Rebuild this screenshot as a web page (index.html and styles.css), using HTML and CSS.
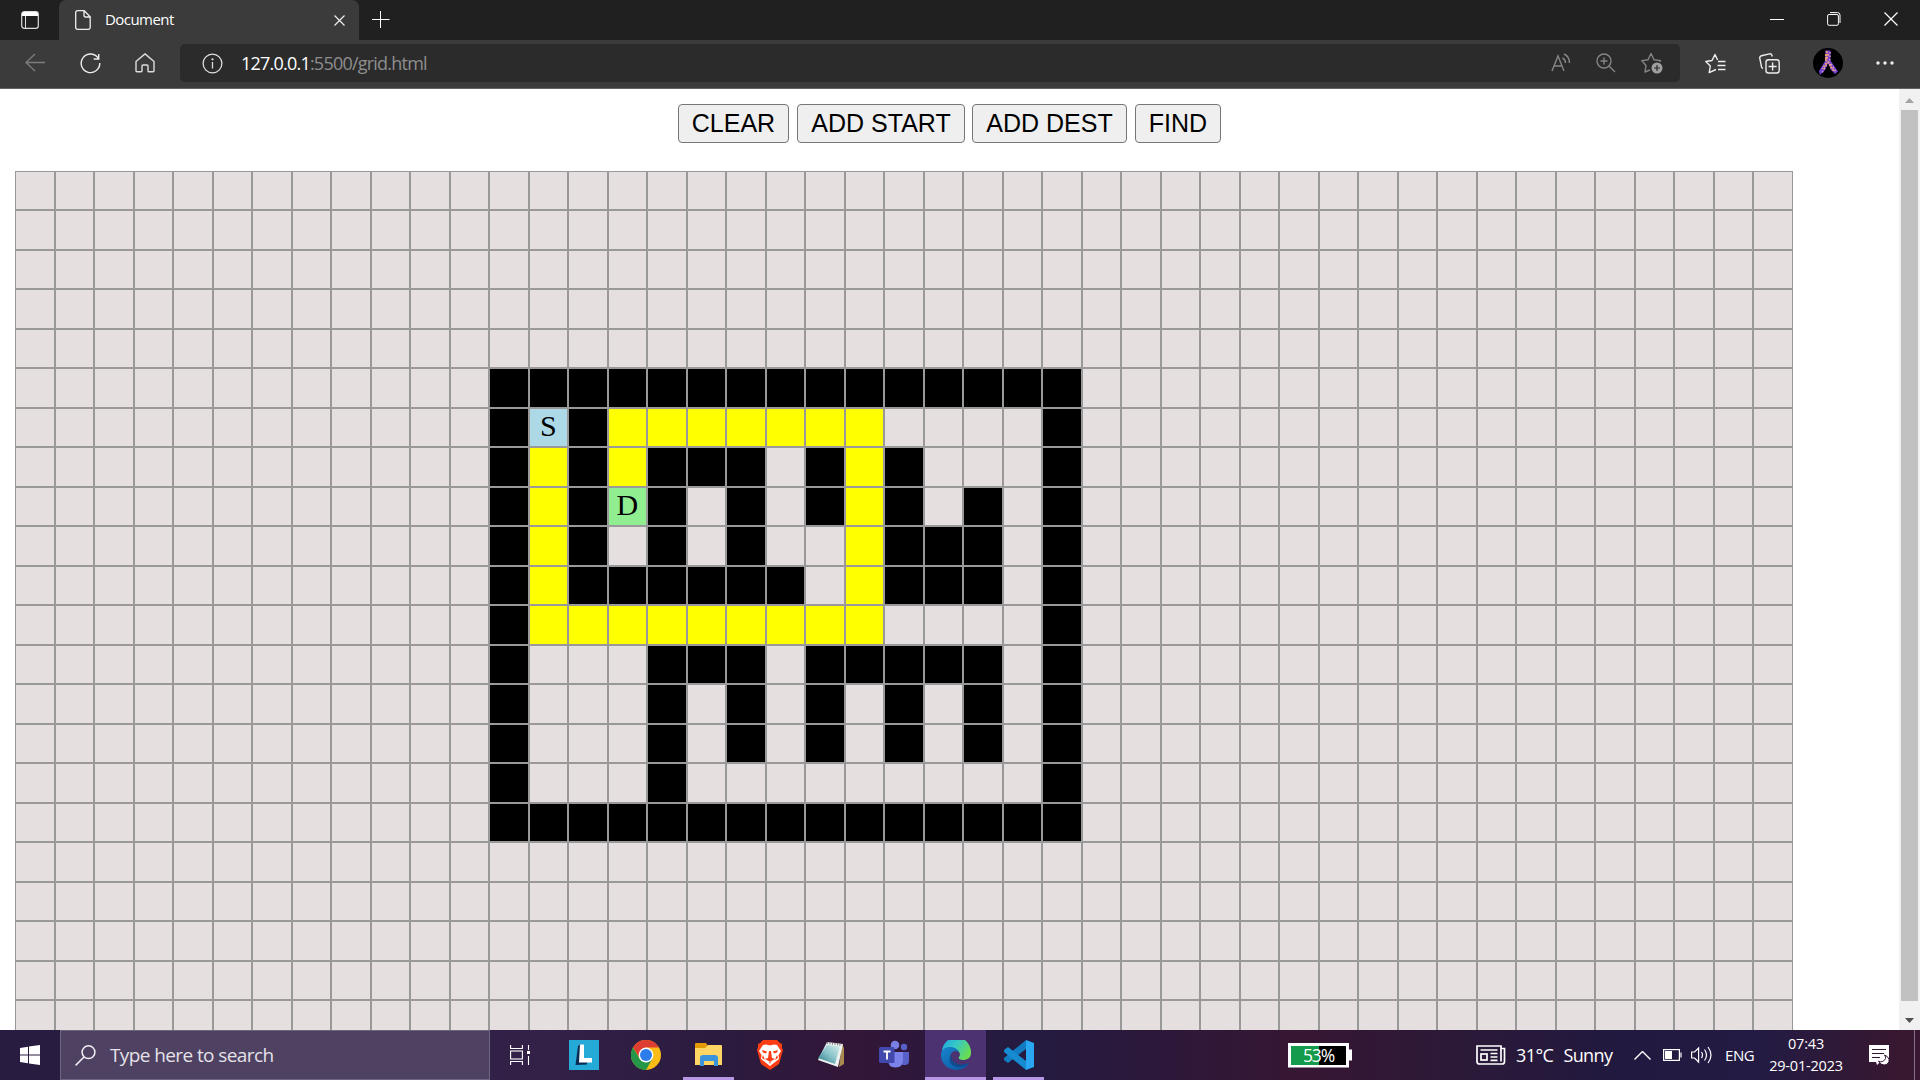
FILE: index.html
```html
<!DOCTYPE html>
<html lang="en">
<head>
<meta charset="utf-8">
<title>Document</title>
<link rel="stylesheet" href="styles.css">
</head>
<body>
<header class="tabs">
  <div class="tab-menu"><svg width="18" height="18" viewBox="0 0 18 18"><rect x=".7" y=".7" width="16.6" height="16.6" rx="2.6" fill="none" stroke="#ddd" stroke-width="1.2"/><path d="M1 5V3q0-2 2-2h12q2 0 2 2v2z" fill="#fff"/><path d="M4.500 5v12" stroke="#ddd"/></svg></div>
  <div class="tab">
    <svg width="16" height="20" viewBox="0 0 16 20" fill="none" stroke="#eee" stroke-width="1.3"><path d="M2.500.7h6.700l6 6v10.800a1.800 1.800 0 0 1-1.800 1.800H2.500A1.800 1.800 0 0 1 .7 17.500v-15A1.800 1.800 0 0 1 2.500.7zM9 1v4.500A1.400 1.400 0 0 0 10.400 7H15"/></svg>
    <span class="tab-title">Document</span>
    <svg width="11" height="11" viewBox="0 0 11 11" stroke="#eee" stroke-width="1.2"><path d="M.5.5l10 10M10.500.5l-10 10"/></svg>
  </div>
  <div class="new-tab"><svg width="18" height="18" viewBox="0 0 18 18" stroke="#fff"><path d="M9 1v17M0 9.500h18" transform="translate(-.5)"/></svg></div>
  <div class="window-buttons">
    <svg width="14" height="14" viewBox="0 0 14 14" stroke="#fff"><path d="M0 7.500h14"/></svg>
    <svg width="14" height="14" viewBox="0 0 14 14" fill="none" stroke="#fff"><rect x=".6" y="2.500" width="10.800" height="10.800" rx="1.500"/><path d="M3 .6h7.500a2.500 2.500 0 0 1 2.500 2.500V11"/></svg>
    <svg width="14" height="14" viewBox="0 0 14 14" stroke="#fff" stroke-width="1.200"><path d="M.5.500l13 13M13.500.5l-13 13"/></svg>
  </div>
</header>
<nav class="toolbar">
  <div class="nav-buttons">
    <svg width="20" height="20" viewBox="0 0 20 20" fill="none" stroke="#7c7c7c" stroke-width="1.300"><path d="M20 9.500H1M10 1L1 9.500 10 18"/></svg>
    <svg width="21" height="21" viewBox="0 0 21 21" fill="none" stroke="#eee" stroke-width="1.400"><path d="M18.500 5.500A9.300 9.300 0 1 0 19.800 10M18.700 1v5h-5"/></svg>
    <svg width="20" height="20" viewBox="0 0 20 20" fill="none" stroke="#ddd" stroke-width="1.400" stroke-linejoin="round"><path d="M1 8.500L10 .9l9 7.600v9.300q0 1-1 1h-4.300q-.7 0-.7-.7V13a1 1 0 0 0-1-1H8a1 1 0 0 0-1 1v5.100q0 .7-.7.7H2q-1 0-1-1z"/></svg>
  </div>
  <div class="address">
    <svg width="21" height="21" viewBox="0 0 21 21" fill="none" stroke="#ddd" stroke-width="1.300"><circle cx="10.500" cy="10.500" r="9.400"/><path d="M10.500 9v6.500"/><circle cx="10.500" cy="6.300" r=".5" fill="#ddd"/></svg>
    <span class="url"><b>127.0.0.1</b>:5500/grid.html</span>
    <span class="address-tools">
      <svg width="20" height="20" viewBox="0 0 20 20" fill="none" stroke="#858585" stroke-width="1.400"><path d="M1 18L7 3l6 15M3.200 13h7.700M11.500 5q3 1.500 3 5M13 1q5.500 2.500 5.500 9"/></svg>
      <svg width="20" height="20" viewBox="0 0 20 20" fill="none" stroke="#858585" stroke-width="1.400"><circle cx="8" cy="8" r="7"/><path d="M13 13l6 6M8 4.500v7M4.500 8h7"/></svg>
      <svg width="22" height="22" viewBox="0 0 22 22" fill="none" stroke="#858585" stroke-width="1.400" stroke-linejoin="round"><path d="M9 18l-5 2 1-6.500L.8 8.600l6.300-.9L10 1.500l3 6.200 6.500.9-1 1.300"/><circle cx="16" cy="16" r="5.500" fill="#a0a0a0" stroke="none"/><path d="M16 13v6M13 16h6" stroke="#292929" stroke-width="1.200"/></svg>
    </span>
  </div>
  <div class="tools">
    <svg width="21" height="21" viewBox="0 0 21 21" fill="none" stroke="#eee" stroke-width="1.400" stroke-linejoin="round"><path d="M11 16.500L4.200 19.600 5.300 13 .8 8.500l6.200-1L10 1.500l2.600 5.500M13 8.500h7.500M12.500 12.500h8M13 16.500h7.500"/></svg>
    <svg width="21" height="21" viewBox="0 0 21 21" fill="none" stroke="#eee" stroke-width="1.400"><path d="M4 15.500Q2.800 15 2.500 13.800L.8 5.300Q.4 3.300 2.400 2.800L10.500.9q1.700-.4 2.400 1.300l.4 1.300"/><rect x="7" y="6.800" width="13.200" height="13.200" rx="2.500"/><path d="M13.600 9.500v8M9.600 13.500h8"/></svg>
    <svg width="30" height="30" viewBox="0 0 30 30"><circle cx="15" cy="15" r="15" fill="#000"/><path d="M12.500 2.500h5v10l7.500 11-3 2.500-4-4-3-7-3 7-5 5-1-4 6-10z" fill="#6f42d0"/><path d="M13.500 3l1.500 4-2 5 3 3 3 6 3 2M13 6v5M13.500 15l-4 6" stroke="#efa071" stroke-width="2" stroke-dasharray="2 1" fill="none"/><path d="M17 4v7l-2 4-6 10M18 16l5 8" stroke="#e09bc0" stroke-width="1.500" stroke-dasharray="1.500 2" fill="none"/></svg>
    <svg width="18" height="6" viewBox="0 0 18 6" fill="#eee"><circle cx="2" cy="3" r="1.700"/><circle cx="9" cy="3" r="1.700"/><circle cx="16" cy="3" r="1.700"/></svg>
  </div>
</nav>
<div class="viewport">
  <main class="page">
    <div class="controls"><button class="btn w-clear">CLEAR</button><button class="btn w-start">ADD START</button><button class="btn w-dest">ADD DEST</button><button class="btn w-find">FIND</button></div>
    <div class="board" id="board"></div>
  </main>
  <aside class="scrollbar">
    <svg class="arrow" width="9" height="5" viewBox="0 0 9 5"><path d="M0 5L4.500 0 9 5z" fill="#a3a3a3"/></svg>
    <div class="thumb"></div>
    <svg class="arrow down" width="9" height="5" viewBox="0 0 9 5"><path d="M0 0h9L4.500 5z" fill="#505050"/></svg>
  </aside>
</div>
<footer class="taskbar">
  <div class="start"><svg width="20" height="20" viewBox="0 0 20 20" fill="#fff"><path d="M0 3l8-1.200v7.700H0zM9 1.600L20 0v9.500H9zM0 10.500h8v7.700L0 17zM9 10.500h11V20L9 18.400z"/></svg></div>
  <div class="search"><svg width="21" height="21" viewBox="0 0 21 21" fill="none" stroke="#f1eff4" stroke-width="1.500"><circle cx="13.500" cy="7.200" r="6.400"/><path d="M9 12L.6 20.400"/></svg><span>Type here to search</span></div>
  <div class="task-view"><svg width="20" height="20" viewBox="0 0 20 20" fill="none" stroke="#fff" stroke-width="1.100"><path d="M.6 0v3.500h11.800V0M.6 20v-3.500h11.800V20M18.500 0v5M18.500 11v9"/><rect x=".6" y="6" width="11.800" height="8"/><path d="M17 6h3v3h-3z" fill="#fff" stroke="none"/></svg></div>
  <div class="apps">
    <div class="app"><svg width="30" height="30" viewBox="0 0 30 30"><path fill="#25aad7" d="M0 0h30v30H0z"/><path fill="#092b54" d="M9 6l3-2v18h6v2.500l-11.500.5z"/><path fill="#fff" d="M11 4.500h4V18h8v4.500H10z"/></svg></div>
    <div class="app"><svg width="30" height="30" viewBox="0 0 30 30"><circle cx="15" cy="15" r="15" fill="#fbbc16"/><path d="M2 7.500A15 15 0 0 1 28 7.500H15L9 18.500z" fill="#df3e32"/><path d="M2 7.500A15 15 0 0 0 15 30l6.500-11.500H8.500z" fill="#239747"/><circle cx="15" cy="15" r="7.400" fill="#fff"/><circle cx="15" cy="15" r="6" fill="#2c7de9"/></svg></div>
    <div class="app open"><svg width="30" height="30" viewBox="0 0 30 30"><path d="M1 4q0-1 1-1h10l2 3v6H1z" fill="#e39a04"/><path d="M1 8h10l3-3h13q1 0 1 1v19H1z" fill="#ffd664"/><path d="M6 26v-8q0-3 3-3h12q3 0 3 3v8h-4v-5H10v5z" fill="#3b94db"/></svg></div>
    <div class="app"><svg width="30" height="30" viewBox="0 0 30 30"><path d="M8 0h14l3 3 2 1v4l1 2-4 14-9 6-9-6L2 10l1-3V4l2-1z" fill="#fb3d16"/><path d="M8 5l3-.5 4 1 4-1 3 .5 4 6-2.500 4 .5 4-9 7-9-7 .5-4L4 11z" fill="#fff"/><path d="M7 10l5 1.500-1 2-3-1zM23 10l-5 1.500 1 2 3-1zM14 11h2l1 7 3 1-4.500 2.500v2h-1v-2L10 19l3-1zM8 15l2 5-3-2zM22 15l-2 5 3-2z" fill="#fb3d16"/></svg></div>
    <div class="app"><svg width="30" height="30" viewBox="0 0 30 30"><defs><linearGradient id="note" x1="0" y1="1" x2="1" y2="0"><stop stop-color="#287685"/><stop offset=".5" stop-color="#87c2c8"/><stop offset="1" stop-color="#d9eeec"/></linearGradient></defs><path d="M25 4l2 4v16l-5 3z" fill="#a98a51"/><path d="M10 2l16 2-5 23L1 20z" fill="#eef3f2"/><path d="M10 5l13 1.500-5 17.500L1 18z" fill="url(#note)"/><path d="M10 3l15 2" stroke="#777" stroke-dasharray="1 1.500" stroke-width="2"/></svg></div>
    <div class="app"><svg width="30" height="30" viewBox="0 0 30 30"><circle cx="16" cy="5" r="4.300" fill="#7880e4"/><circle cx="25" cy="7" r="3.200" fill="#5860ca"/><path d="M23 12h7v9q0 4-4 4h-3z" fill="#5860ca"/><path d="M9 12h15v8q0 7.500-7.500 7.500T9 20z" fill="#7b83eb"/><rect y="7" width="15.500" height="16" rx="1.500" fill="#4149ad"/><path d="M4.500 11.500h7M8 11v8.500" stroke="#fff" stroke-width="1.800"/></svg></div>
    <div class="app open active"><svg width="30" height="30" viewBox="0 0 30 30"><defs><linearGradient id="edge1" x1="0" y1="0" x2="1" y2=".5"><stop stop-color="#1ba5df"/><stop offset=".5" stop-color="#36c7c9"/><stop offset="1" stop-color="#68dd54"/></linearGradient><linearGradient id="edge2" x1="0" y1="0" x2="1" y2="1"><stop stop-color="#1686ce"/><stop offset="1" stop-color="#0c509c"/></linearGradient></defs><path d="M1 11A14.500 14.500 0 0 1 30 13c0 5-4 7-8 7-4 0-5-2-4-3 3-4-2-8-6-7z" fill="url(#edge1)"/><path d="M0 15C0 5 15 5 18 12c-6-3-10 2-8 7 2 6 9 8 18 4-3 5-8 7-13 7A15 15 0 0 1 0 15z" fill="url(#edge2)"/><path d="M10 15c-4 6 1 12 8 12q6 0 10-4c-9 4-18 0-18-8z" fill="#104a8d"/></svg></div>
    <div class="app open"><svg width="30" height="30" viewBox="0 0 30 30"><path d="M22 0v9L4 23l-4-3v-2z" fill="#127bc1"/><path d="M0 10l4-3 18 14v9L0 12z" fill="#168bd2"/><path d="M22 0l8 3v24l-8 3z" fill="#29a7f3"/></svg></div>
  </div>
  <div class="meter"><span>53%</span></div>
  <div class="weather"><svg width="30" height="20" viewBox="0 0 30 20" fill="none" stroke="#fff" stroke-width="1.700"><path d="M25 3.500h3.500v13q0 2.500-2.500 2.500H3.500Q1 19 1 16.500V1h24v15.500M4.500 5h17M14.500 8.500h7M14.500 12h7M14.500 15.300h7"/><rect x="5" y="9" width="6" height="6"/></svg><span class="weather-text">31°C&nbsp; Sunny</span></div>
  <svg class="chevron" width="17" height="9" viewBox="0 0 17 9" fill="none" stroke="#fff" stroke-width="1.400"><path d="M.5 8.500l8-8 8 8"/></svg>
  <svg class="battery" width="19" height="12" viewBox="0 0 19 12" fill="none" stroke="#fff" stroke-width="1.200"><rect x=".6" y=".6" width="15.800" height="10.800"/><path d="M18 3.500v5"/><path d="M2 2h7v8H2z" fill="#fff" stroke="none"/></svg>
  <svg class="speaker" width="22" height="18" viewBox="0 0 22 18" fill="none" stroke="#fff" stroke-width="1.200"><path d="M.6 6h3l4-4v14l-4-4h-3zM10.500 6q2 3 0 6M13.500 3.500q4 5.500 0 11M17 1q6 8 0 16"/></svg>
  <span class="language">ENG</span>
  <div class="clock"><span class="time">07:43</span><span class="date">29-01-2023</span></div>
  <svg class="notices" width="21" height="21" viewBox="0 0 21 21"><path d="M0 0h20v17h-9l-3 3-1-3H0z" fill="#fff"/><path d="M3 4.500h14M3 8.500h12M3 12.500h8" stroke="#341733" stroke-width="1.200"/><path d="M15.500 10q3 4-2 6.500-2 .6-4-.3 2 4 6 3.800 5-1 4.500-5.500-1-3.500-4.500-4.500z" fill="#fff" stroke="#341733"/></svg>
  <div class="desktop-edge"></div>
</footer>
<script src="grid.js"></script>
</body>
</html>
```
FILE: styles.css
```css
* { box-sizing: border-box; }
body { margin: 0; width: 1920px; height: 1080px; overflow: hidden; display: flex; flex-direction: column; font-family: "Open Sans", "Noto Sans", sans-serif; background: #fff; }
svg { display: block; flex: none; }

.tabs { height: 40px; flex: none; display: flex; background: #202020; color: #fff; }
.tab-menu { width: 59px; padding: 11px 0 0 21px; }
.tab { width: 300px; padding: 0 14px 0 16px; display: flex; align-items: center; background: #3b3b3b; border-radius: 7px 7px 0 0; }
.tab-title { flex: 1; padding-left: 14px; font-size: 15px; letter-spacing: -.55px; line-height: 38px; padding-bottom: 2px; }
.new-tab { padding: 10px 0 0 13px; }
.window-buttons { margin-left: auto; padding: 12px 22px 0 0; display: flex; gap: 43px; }

.toolbar { height: 49px; flex: none; display: flex; align-items: center; padding: 0 26px 2px 25px; background: #3b3b3b; border-bottom: 1px solid #626262; }
.nav-buttons { width: 155px; display: flex; align-items: center; gap: 34.5px; }
.address { width: 1500px; height: 38px; padding: 0 17px 0 22px; border-radius: 5px; background: #2b2b2b; display: flex; align-items: center; }
.url { padding-left: 18px; font-size: 18px; letter-spacing: -.78px; color: #8e8e8e; }
.url b { font-weight: 400; color: #fff; }
.address-tools { margin-left: auto; display: flex; align-items: center; gap: 25px; }
.tools { flex: 1; padding-left: 25px; display: flex; align-items: center; justify-content: space-between; }

.viewport { height: 941px; flex: none; display: flex; overflow: hidden; }
.page { width: 1899px; height: 941px; overflow: hidden; padding: 15px 0 0 15px; }
.controls { display: flex; padding-left: 663px; height: 66.67px; }
.btn { height: 39px; padding: 0; border: 1px solid #767676; border-radius: 4px; background: #efefef; color: #000; font: 25px "Liberation Sans", Arial, sans-serif; white-space: nowrap; }
.w-clear { width: 111px; margin-right: 8px; }
.w-start { width: 168px; margin-right: 7px; }
.w-dest { width: 155px; margin-right: 8px; }
.w-find { width: 86px; }
.board { display: grid; grid-template-columns: repeat(45, 39.5px); grid-auto-rows: 39.5px; }
.cell { border: 1px solid #999; background: #e5dfdf; font: 30px/33px "Liberation Serif", "Times New Roman", serif; text-align: center; }
.wall { background: #000; }
.path { background: #ff0; }
.source { background: #add8e6; }
.dest { background: #90ee90; }
.scrollbar { width: 21px; padding: 9px 2px 7px; background: #f1f1f1; display: flex; flex-direction: column; align-items: center; }
.thumb { width: 17px; height: 891px; margin-top: 7px; background: #c1c1c1; }
.down { margin-top: auto; }

.taskbar { height: 50px; flex: none; display: flex; align-items: center; color: #fff; background: linear-gradient(90deg, #281c40 0, #281c40 60px, #332148 550px, #2b1b3e 720px, #331638 860px, #251a3f 1000px, #251a3f 1050px, #361633 1300px, #2c1938 1450px, #21193f 1620px, #231b43 1760px, #381730 1900px); }
.start { width: 60px; padding-left: 20px; }
.search { width: 430px; height: 50px; padding-left: 14px; display: flex; align-items: center; background: #4e4161; border: 1px solid #6f6581; color: #e4e1e8; font-size: 19px; letter-spacing: -.6px; }
.search span { padding-left: 14px; }
.task-view { width: 63px; padding-left: 20px; }
.apps { display: flex; }
.app { width: 62px; height: 50px; padding: 7px 0 0; display: flex; justify-content: center; border: 0 solid #b696e5; }
.app.open { width: 51px; margin: 0 5px 0 6px; border-bottom-width: 3px; }
.app.open.active { width: 61px; margin: 0 1px 0 0; background: #4c3270; }
.app svg { margin-top: 3px; }
.meter { width: 64px; height: 25px; margin-left: 239px; padding-right: 3px; border: 3px solid #fff; border-right-width: 6px; background: linear-gradient(90deg, #149b4b 50%, #000 50%); display: flex; align-items: center; justify-content: center; font-size: 17.5px; letter-spacing: -1.1px; clip-path: polygon(0 0, 61px 0, 61px 7px, 64px 7px, 64px 18px, 61px 18px, 61px 25px, 0 25px); }
.meter span { padding-left: 3px; }
.weather { width: 158px; margin-left: 124px; display: flex; align-items: center; }
.weather-text { padding-left: 10px; font-size: 18px; letter-spacing: -.6px; word-spacing: 1px; white-space: nowrap; }
.chevron { margin-right: 12px; }
.battery { margin-right: 9px; }
.speaker { margin-right: 12px; }
.language { width: 39px; font-size: 15px; letter-spacing: -.4px; }
.clock { width: 84px; display: flex; flex-direction: column; align-items: center; font-size: 14.5px; line-height: 22px; letter-spacing: -.2px; }
.notices { margin-left: 21px; }
.desktop-edge { width: 1px; height: 50px; margin-left: auto; margin-right: 5px; background: #83708a; }
```
FILE: grid.js
```js
// # wall, * path, S source, D destination, . open cell
const offset = 12;
const firstRow = 5;
const maze = [
  "###############",
  "#S#*******....#",
  "#*#*###.#*#...#",
  "#*#D#.#.#*#.#.#",
  "#*#.#.#..*###.#",
  "#*######.*###.#",
  "#*********....#",
  "#...###.#####.#",
  "#...#.#.#.#.#.#",
  "#...#.#.#.#.#.#",
  "#...#.........#",
  "###############"
];
const kinds = { "#": "wall", "*": "path", S: "source", D: "dest" };
const board = document.getElementById("board");
for (let r = 0; r < 22; r++) {
  for (let c = 0; c < 45; c++) {
    const mark = (maze[r - firstRow] || "")[c - offset];
    const cell = document.createElement("div");
    cell.className = "cell " + (kinds[mark] || "");
    if (mark === "S" || mark === "D") cell.textContent = mark;
    board.appendChild(cell);
  }
}
```
